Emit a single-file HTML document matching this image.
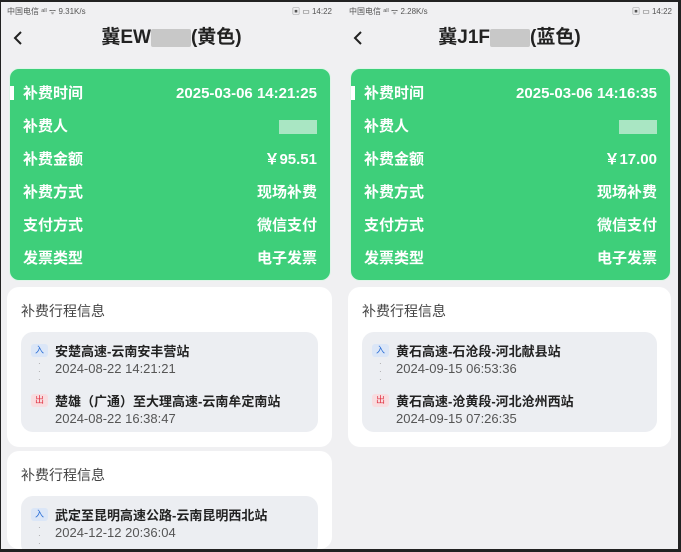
<!DOCTYPE html>
<html><head><meta charset="utf-8"><style>
*{margin:0;padding:0;box-sizing:border-box}
body{width:681px;height:552px;background:#222;position:relative;overflow:hidden;font-family:"Liberation Sans","Noto Sans CJK SC",sans-serif}
.ph{position:absolute;top:2px;background:#f0f0f2;height:547px;overflow:hidden}
.sb{position:absolute;top:4px;font-size:8px;color:#555}
.title{position:absolute;top:23px;width:100%;text-align:center;font-size:19px;line-height:26px;font-weight:bold;color:#222}
.back{position:absolute;left:11px;top:28px}
.green{position:absolute;left:8px;top:66px;width:322px;height:213px;background:#3ecf7a;border-radius:10px;border:1px solid #dff5e8}
.row{position:absolute;left:13px;right:13px;height:20px;line-height:20px;color:#fff;font-weight:bold;font-size:15px;display:flex;justify-content:space-between;align-items:center}
.bar{position:absolute;left:0;top:17px;width:4px;height:14px;background:#fff}
.card{position:absolute;left:6px;width:325px;background:#fff;border-radius:12px}
.ct{position:absolute;left:14px;top:14px;font-size:14px;color:#444}
.trip{position:absolute;left:14px;top:45px;width:297px;height:100px;background:#eceef2;border-radius:12px}
.bd{position:absolute;left:10px;width:17px;height:13px;border-radius:3px;font-size:9px;text-align:center;line-height:13px}
.in{background:#dbe6f7;color:#2c6fd6}.out{background:#f8dde0;color:#e03040}
.nm{position:absolute;left:34px;font-size:13px;font-weight:bold;color:#222;white-space:nowrap}
.tm{position:absolute;left:34px;font-size:13px;color:#555}
.dots{position:absolute;left:17px;width:2px;font-size:8px;color:#999;line-height:8px}
.blur{display:inline-block;background:#c8c8c8;height:18px;width:40px;vertical-align:middle;border-radius:2px}
.wb{display:inline-block;background:#a9e6c3;width:38px;height:14px}
</style></head><body>
<div class="ph" style="left:1px;width:341px">
<div class="sb" style="left:6px">中国电信 ᵃˡˡ ᯤ 9.31K/s</div><div class="sb" style="right:10px">▣ ▭ 14:22</div>
<svg class="back" width="12" height="16" viewBox="0 0 12 16"><path d="M9 2 L3 8 L9 14" fill="none" stroke="#222" stroke-width="2"/></svg>
<div class="title">冀EW<span class="blur"></span>(黄色)</div>
<div class="green"><div class="bar"></div>
<div class="row" style="top:15px"><span>补费时间</span><span>2025-03-06 14:21:25</span></div>
<div class="row" style="top:48px"><span>补费人</span><span class="wb"></span></div>
<div class="row" style="top:81px"><span>补费金额</span><span>￥95.51</span></div>
<div class="row" style="top:114px"><span>补费方式</span><span>现场补费</span></div>
<div class="row" style="top:147px"><span>支付方式</span><span>微信支付</span></div>
<div class="row" style="top:180px"><span>发票类型</span><span>电子发票</span></div>
</div>
<div class="card" style="top:285px;height:160px"><div class="ct">补费行程信息</div>
<div class="trip"><div class="bd in" style="top:12px">入</div><div class="nm" style="top:9px">安楚高速-云南安丰营站</div><div class="tm" style="top:29px">2024-08-22 14:21:21</div>
<div class="dots" style="top:28px">·<br>·<br>·</div>
<div class="bd out" style="top:62px">出</div><div class="nm" style="top:59px">楚雄（广通）至大理高速-云南牟定南站</div><div class="tm" style="top:79px">2024-08-22 16:38:47</div></div></div>
<div class="card" style="top:449px;height:98px"><div class="ct">补费行程信息</div>
<div class="trip" style="height:60px"><div class="bd in" style="top:12px">入</div><div class="nm" style="top:9px">武定至昆明高速公路-云南昆明西北站</div><div class="tm" style="top:29px">2024-12-12 20:36:04</div><div class="dots" style="top:28px">·<br>·<br>·</div></div></div>
</div>
<div class="ph" style="left:341px;width:337px">
<div class="sb" style="left:8px">中国电信 ᵃˡˡ ᯤ 2.28K/s</div><div class="sb" style="right:6px">▣ ▭ 14:22</div>
<svg class="back" width="12" height="16" viewBox="0 0 12 16"><path d="M9 2 L3 8 L9 14" fill="none" stroke="#222" stroke-width="2"/></svg>
<div class="title">冀J1F<span class="blur"></span>(蓝色)</div>
<div class="green" style="left:9px;width:321px"><div class="bar"></div>
<div class="row" style="top:15px"><span>补费时间</span><span>2025-03-06 14:16:35</span></div>
<div class="row" style="top:48px"><span>补费人</span><span class="wb"></span></div>
<div class="row" style="top:81px"><span>补费金额</span><span>￥17.00</span></div>
<div class="row" style="top:114px"><span>补费方式</span><span>现场补费</span></div>
<div class="row" style="top:147px"><span>支付方式</span><span>微信支付</span></div>
<div class="row" style="top:180px"><span>发票类型</span><span>电子发票</span></div>
</div>
<div class="card" style="top:285px;height:160px;left:7px;width:323px"><div class="ct">补费行程信息</div>
<div class="trip" style="width:295px"><div class="bd in" style="top:12px">入</div><div class="nm" style="top:9px">黄石高速-石沧段-河北献县站</div><div class="tm" style="top:29px">2024-09-15 06:53:36</div>
<div class="dots" style="top:28px">·<br>·<br>·</div>
<div class="bd out" style="top:62px">出</div><div class="nm" style="top:59px">黄石高速-沧黄段-河北沧州西站</div><div class="tm" style="top:79px">2024-09-15 07:26:35</div></div></div>
</div>
</body></html>
